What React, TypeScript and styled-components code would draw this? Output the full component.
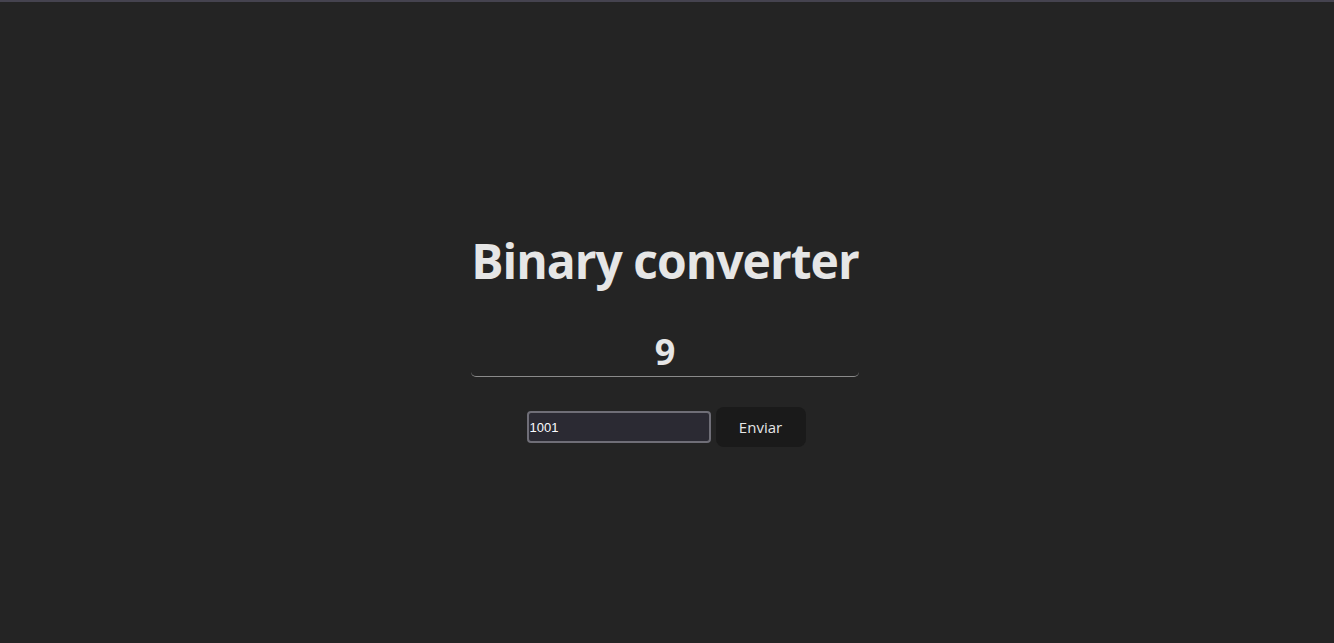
import React, { useState } from "react";
import styled, { createGlobalStyle } from "styled-components";

const Global = createGlobalStyle`
  html, body { margin: 0; padding: 0; }
  body {
    background: #242424;
    color: rgba(255,255,255,0.87);
    font-family: "Open Sans", "Noto Sans", sans-serif;
    min-height: 643px;
    border-top: 2px solid #45434f;
    box-sizing: border-box;
  }
`;

const Page = styled.main`
  height: 641px;
  display: flex;
  flex-direction: column;
  align-items: center;
  padding-top: 226px;
  padding-right: 4px;
  box-sizing: border-box;
`;

const Title = styled.h1`
  margin: 0;
  font-size: 48px;
  font-weight: 700;
  line-height: 66px;
  color: #e6e6e6;
  letter-spacing: -1px;
`;

const Result = styled.div`
  margin-top: 33px;
  width: 388px;
  height: 50px;
  box-sizing: border-box;
  border-bottom: 1px solid #8a8a8a;
  border-radius: 0 0 5px 5px;
  display: flex;
  align-items: center;
  justify-content: center;
  font-size: 36px;
  font-weight: 700;
  color: #e6e6e6;
`;

const Form = styled.form`
  margin-top: 30px;
  display: flex;
  align-items: center;
  gap: 5px;
  margin-left: 2px;
`;

const Input = styled.input`
  width: 184px;
  height: 32px;
  box-sizing: border-box;
  background: #2b2a33;
  border: 2px solid #6f6e77;
  border-radius: 4px;
  color: #fbfbfe;
  font-family: "Liberation Sans", Arial, sans-serif;
  font-size: 13px;
  padding: 0 1px;
  outline: none;
`;

const Button = styled.button`
  width: 90px;
  height: 40px;
  border: 1px solid transparent;
  border-radius: 8px;
  background: #1a1a1a;
  color: #e6e6e6;
  font-family: "Open Sans", "Noto Sans", sans-serif;
  font-size: 15px;
  font-weight: 500;
  cursor: pointer;
`;

export default function App() {
  const [value, setValue] = useState("1001");
  const [result, setResult] = useState("9");
  return (
    <>
      <Global />
      <Page>
        <Title>Binary converter</Title>
        <Result>{result}</Result>
        <Form
          onSubmit={(e) => {
            e.preventDefault();
            const n = parseInt(value, 2);
            setResult(isNaN(n) ? "" : String(n));
          }}
        >
          <Input value={value} onChange={(e) => setValue(e.target.value)} />
          <Button type="submit">Enviar</Button>
        </Form>
      </Page>
    </>
  );
}
